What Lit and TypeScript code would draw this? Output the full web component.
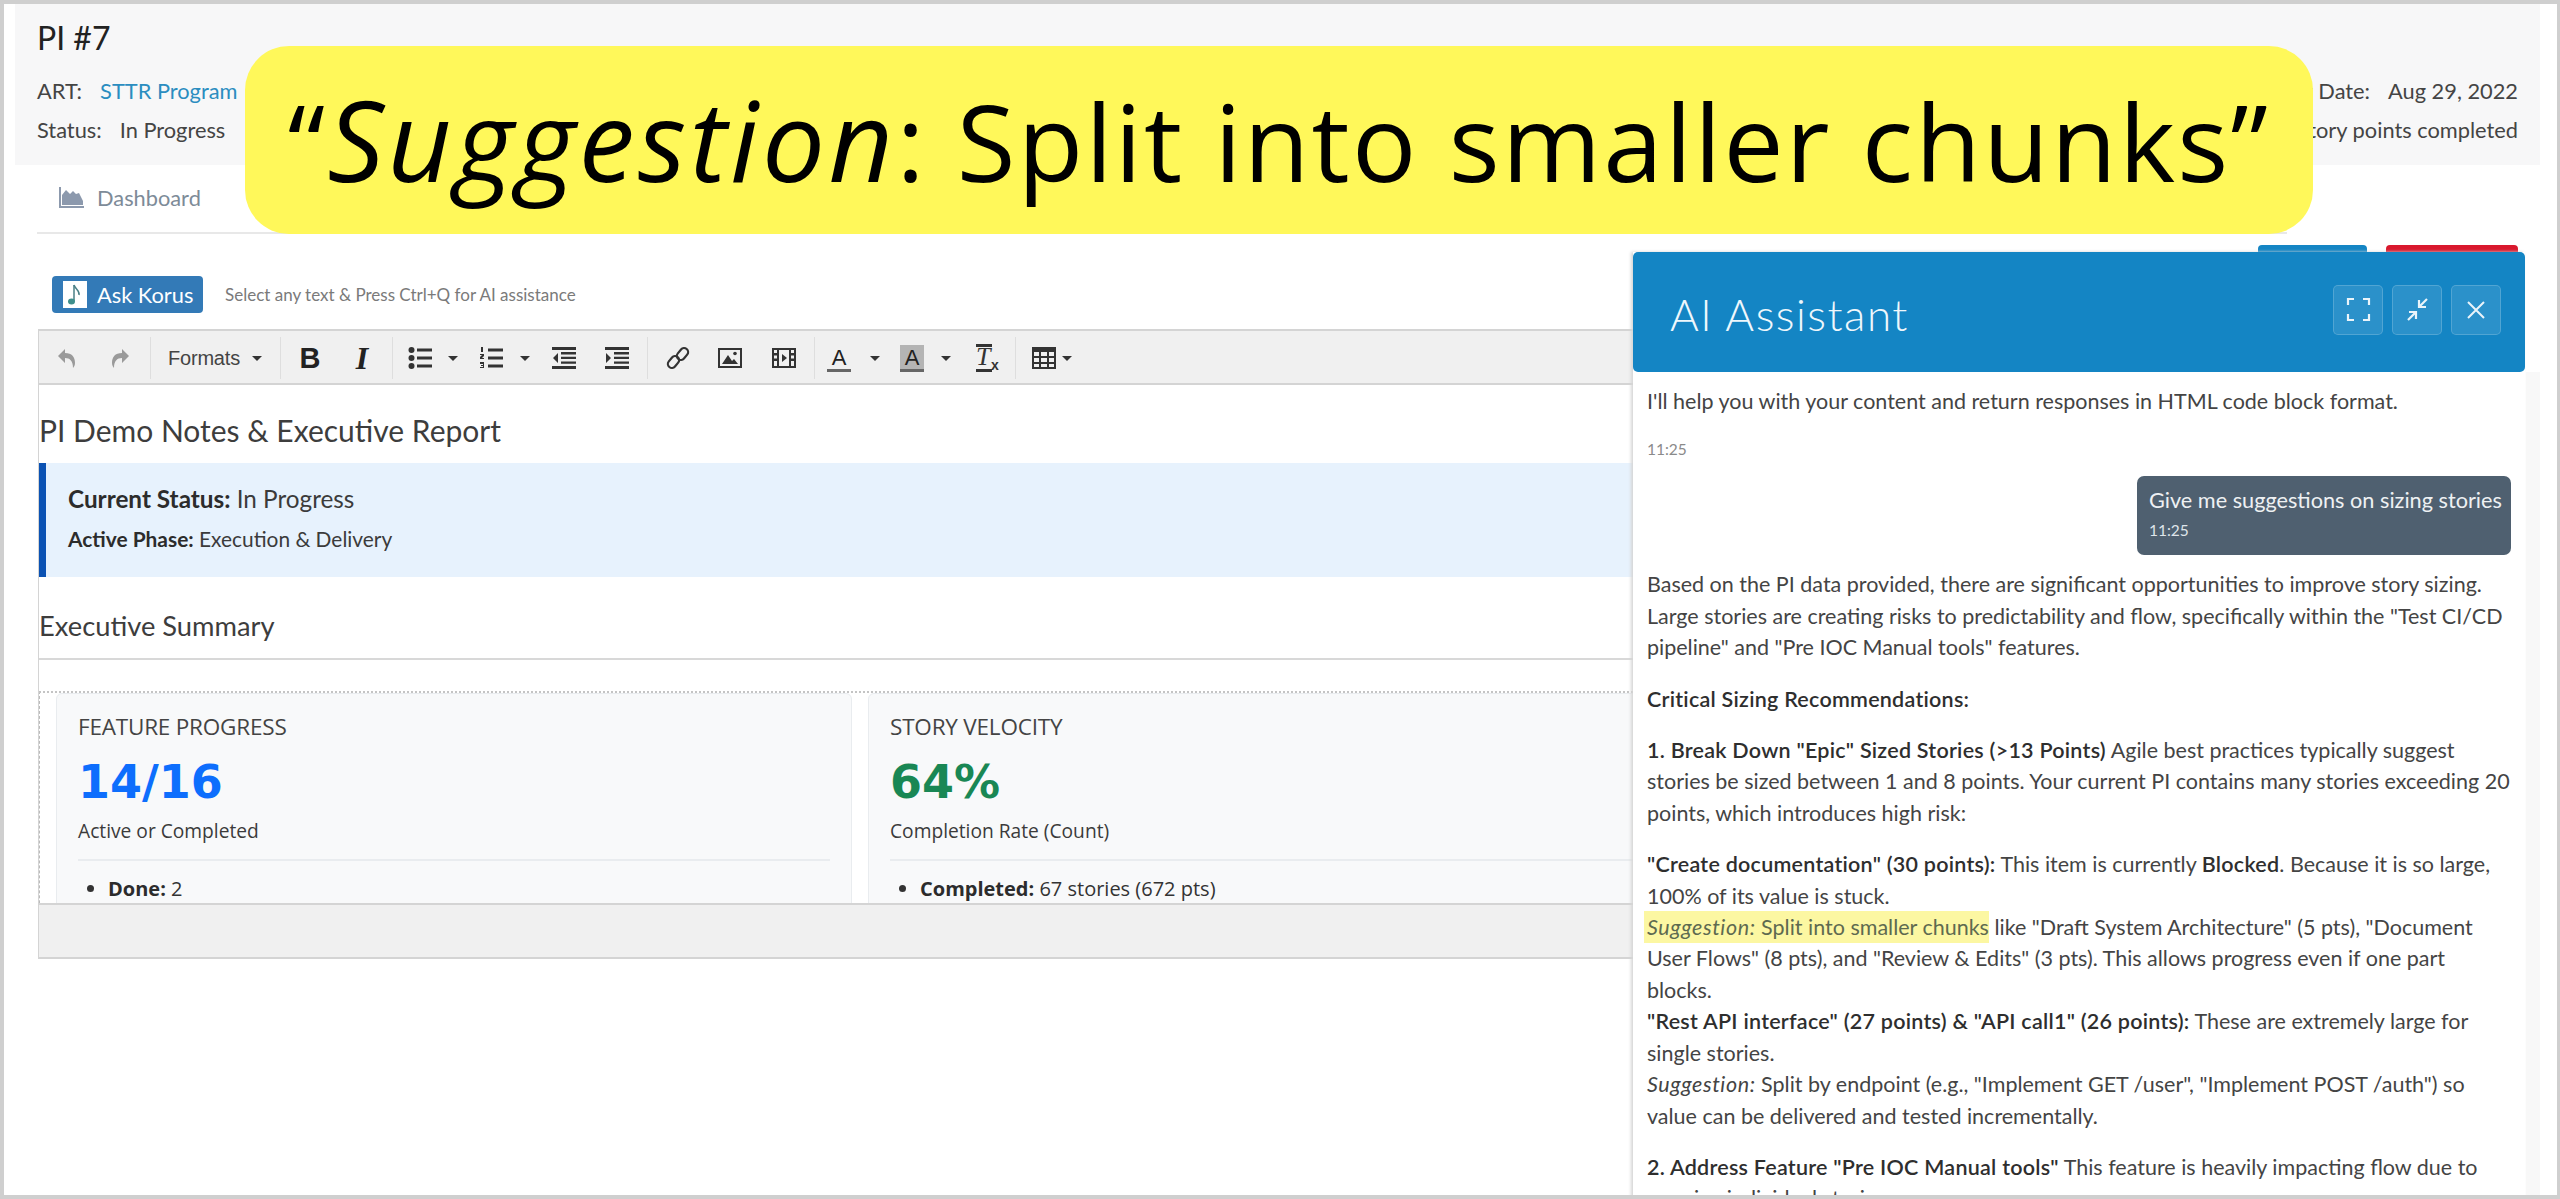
import { LitElement, html, css, svg } from "lit";
import { customElement } from "lit/decorators.js";

const ic = (body: unknown, vb = "0 0 24 24") => html`<svg class="ico" viewBox=${vb} width="24" height="24" fill="currentColor">${body}</svg>`;
const undo = ic(svg`<path d="M3 10 10 3v4c7 0 10 4 10 10 0 2-1 4-2 5 0-7-3-10-8-10v5z"/>`);
const redo = ic(svg`<path d="M21 10 14 3v4C7 7 4 11 4 17c0 2 1 4 2 5 0-7 3-10 8-10v5z"/>`);
const bullet = ic(svg`<circle cx="3.5" cy="4" r="3"/><circle cx="3.5" cy="12" r="3"/><circle cx="3.5" cy="20" r="3"/><path d="M9 2.5h15v3H9zM9 10.5h15v3H9zM9 18.5h15v3H9z"/>`);
const numlist = ic(svg`<path d="M2 1h2v5H2zM1 8h4v2l-2 2h2v1H1v-2l2-2H1zM1 16h4v6H1v-1h3v-1H2v-1h2v-1H1z"/><path d="M9 2.5h15v3H9zM9 10.5h15v3H9zM9 18.5h15v3H9z"/>`);
const outdent = ic(svg`<path d="M0 1h24v3H0zM9 6h15v2.4H9zM9 10.7h15v2.4H9zM9 15.4h15v2.4H9zM0 20h24v3H0zM6 7v10l-5-5z"/>`);
const indent = ic(svg`<path d="M0 1h24v3H0zM9 6h15v2.4H9zM9 10.7h15v2.4H9zM9 15.4h15v2.4H9zM0 20h24v3H0zM1 7v10l5-5z"/>`);
const link = ic(svg`<g fill="none" stroke="currentColor" stroke-width="2.2"><rect x="12.5" y="1.5" width="8" height="13" rx="4" transform="rotate(40 16.5 8)"/><rect x="3.5" y="9.5" width="8" height="13" rx="4" transform="rotate(40 7.5 16)"/></g>`);
const image = ic(svg`<path fill-rule="evenodd" d="M0 2h24v20H0zM2 4v16h20V4z"/><path d="M4 18l6-9 4 6 2-2 4 5z"/><circle cx="17" cy="7.500" r="1.800"/>`);
const media = ic(svg`<path fill-rule="evenodd" d="M0 2h24v20H0zM2 4v3h3V4zM2 9.500v3h3v-3zM2 15v5h3v-5zM19 4v3h3V4zM19 9.500v3h3v-3zM19 15v5h3v-5zM7 4v16h10V4z"/><path d="M10 8l5 4-5 4z"/>`);
const table = ic(svg`<path fill-rule="evenodd" d="M0 1h24v22H0zM2 6v4h5V6zM9 6v4h6V6zM17 6v4h5V6zM2 12v4h5v-4zM9 12v4h6v-4zM17 12v4h5v-4zM2 18v3h5v-3zM9 18v3h6v-3zM17 18v3h5v-3z"/>`);

@customElement("app-root")
export class AppRoot extends LitElement {
  static styles = css`
    :host { display: block; position: relative; box-sizing: border-box; width: 2560px; height: 1199px; overflow: hidden; background: #fff; border: solid #cfcfcf; border-width: 4px 3px 4px 4px; font-family: Lato, "Noto Sans", sans-serif; color: #333; }
    .head { margin: 0 17px 0 11px; height: 161px; box-sizing: border-box; padding: 14px 22px 0; background: #f7f7f8; }
    .title { font-size: 32px; line-height: 40px; color: #222; }
    .row { display: flex; justify-content: space-between; font-size: 21.800px; line-height: 32px; margin-top: 17px; color: #444; }
    .row + .row { margin-top: 7px; }
    .row span.l { margin-right: 18px; }
    .lnk { color: #2b8dc0; }
    .tabs { margin: 0 32px 0 33px; height: 67px; box-sizing: border-box; display: flex; align-items: center; gap: 13px; padding: 0 0 3px 22px; color: #7d8b98; font-size: 21.800px; }
    .tabline { height: 2px; background: #e8e8e8; margin: 0 270px 0 33px; }
    .ask { display: flex; align-items: center; gap: 22px; margin: 42px 0 0 48px; height: 37px; }
    .askbtn { display: flex; align-items: center; gap: 10px; width: 151px; height: 37px; box-sizing: border-box; padding-left: 11px; border-radius: 4px; background: #337ab7; color: #fff; font-size: 21.800px; }
    .note { display: block; flex: none; }
    .hint { font-size: 17px; color: #7a7a7a; }
    .editor { margin: 16px 0 0 34px; width: 2000px; height: 630px; border: solid #d4d4d4; border-width: 2px 1px; box-sizing: border-box; display: flex; flex-direction: column; }
    .bar { height: 52px; flex: none; background: #f0f0f0; border-bottom: 2px solid #d4d4d4; box-sizing: content-box; display: flex; align-items: flex-start; color: #333; }
    .grp { display: flex; align-items: center; height: 42px; margin-top: 6px; border-right: 1px solid #dedede; }
    .grp.last { border: 0; }
    .ico { display: block; flex: none; }
    .dim { color: #9a9a9a; }
    .caret { width: 0; height: 0; border: 5px solid transparent; border-top: 5px solid #333; border-bottom: 0; flex: none; }
    .fmt { font-size: 20px; font-family: "Liberation Sans", sans-serif; color: #444; width: 75px; letter-spacing: -.2px; white-space: nowrap; }
    .tb { width: 24px; text-align: center; flex: none; font-family: "Liberation Sans", sans-serif; font-size: 29px; line-height: 24px; color: #222; }
    .b { font-weight: 700; }
    .i { font-family: "Liberation Serif", serif; font-style: italic; font-weight: 700; font-size: 32px; }
    .au { font-size: 22px; height: 27px; line-height: 25px; box-sizing: border-box; border-bottom: 3px solid #666; }
    .ag { background: #b4b4b4; }
    .tx { position: relative; font-family: "Liberation Serif", serif; font-style: italic; font-size: 26px; height: 28px; line-height: 20px; box-sizing: border-box; border-bottom: 3px solid #333; width: 16px; margin-right: 8px; border-top: 3px solid #333; }
    .tx sub { position: absolute; left: 15px; bottom: -4px; font: 700 14px "Liberation Sans", sans-serif; }
    .p1{padding-left:16px;padding-right:18px}.p2{padding-left:17px;padding-right:18px}.p4{padding-left:15px;padding-right:18px}.p5{padding-left:18px;padding-right:18px}.p6{padding-left:12px;padding-right:15px}
    .m5{margin-left:9px}.m6{margin-left:6px}.m16{margin-left:16px}.m17{margin-left:17px}.m19{margin-left:19px}.m20{margin-left:20px}.m21{margin-left:21px}.m22{margin-left:22px}.m25{margin-left:25px}.m28{margin-left:28px}.m29{margin-left:29px}.m30{margin-left:30px}
    .body { flex: 1; min-height: 0; overflow: hidden; color: #3b3b3b; }
    h2 { margin: 0; font-weight: 400; color: #3d3d3d; }
    .h1 { font-size: 30px; line-height: 40px; padding-top: 25px; margin-bottom: 13px; }
    .call { height: 114px; box-sizing: border-box; border-left: 7px solid #0b52b3; background: #e7f2fd; padding: 19px 0 0 22px; }
    .call div:first-child { font-size: 24.300px; line-height: 34px; }
    .call div + div { font-size: 20.900px; line-height: 28px; margin-top: 9px; }
    strong { font-weight: 700; color: #2c2c2c; }
    .h2 { font-size: 27.300px; line-height: 40px; padding-top: 29px; padding-bottom: 12px; border-bottom: 2px solid #d8d8d8; }
    .grid { margin-top: 31px; height: 300px; border-top: 2px dotted #c4c4c4; border-left: 1px dashed #bbb; display: flex; gap: 16px; padding-left: 16px; font-family: "Open Sans", sans-serif; }
    .card { flex: none; width: 796px; height: 300px; box-sizing: border-box; padding: 19px 21px; background: #f8f9fa; border: 1px solid #e9ecef; border-radius: 6px; }
    .card h3 { margin: 0; font-weight: 400; font-size: 22.500px; line-height: 28px; color: #444; letter-spacing: -.2px; }
    .big { font-family: "DejaVu Sans", sans-serif; font-weight: 700; font-size: 46px; line-height: 56px; margin-top: 13px; }
    .blue { color: #0d6efd; } .green { color: #198754; }
    .sub { font-size: 19.200px; line-height: 30px; margin-top: 6px; padding-bottom: 13px; border-bottom: 2px solid #e9ecef; }
    .card ul { margin: 14px 0 0; padding-left: 30px; font-size: 20px; line-height: 28px; color: #333; }
    .foot { height: 52px; flex: none; background: #f0f0f0; border-top: 2px solid #d4d4d4; }
    .banner { position: absolute; left: 241px; top: 42px; width: 2068px; height: 188px; box-sizing: border-box; background: #fff85a; border-radius: 44px; color: #000; font-family: "Open Sans", sans-serif; font-size: 107px; letter-spacing: 2.250px; white-space: nowrap; display: flex; align-items: center; justify-content: center; padding-bottom: 4px; }
    .banner em { font-size: 112px; letter-spacing: 3.500px; }
    .btns { position: absolute; top: 241px; left: 2254px; display: flex; gap: 19px; }
    .b1 { width: 109px; height: 40px; border-radius: 4px; background: #1485c4; }
    .b2 { width: 132px; height: 40px; border-radius: 4px; background: #d9182d; }
    .band { position: absolute; left: 2522px; top: 368px; width: 14px; height: 830px; background: #f8f8f8; }
    .panel { position: absolute; left: 1629px; top: 248px; width: 892px; height: 960px; display: flex; flex-direction: column; background: #fff; box-shadow: -2px 0 3px #d5d5d5; }
    .phead { height: 120px; flex: none; box-sizing: border-box; display: flex; align-items: center; justify-content: space-between; padding: 0 24px 0 37px; background: #1485c4; border-radius: 5px; color: #fff; }
    .ptitle { font-size: 44px; letter-spacing: 1.500px; color: #eef7fc; padding-top: 4px; font-weight: 300; }
    .pbtns { display: flex; gap: 9px; margin-bottom: 5px; }
    .pb { width: 50px; height: 50px; box-sizing: border-box; border-radius: 5px; background: rgba(255,255,255,.1); border: 1px solid rgba(255,255,255,.18); display: flex; align-items: center; justify-content: center; }
    .pb svg { display: block; }
    .msgs { padding: 14px 14px 0; font-size: 21.500px; line-height: 31.400px; color: #444; }
    .msgs p { margin: 0; }
    .t { font-size: 15.500px; line-height: 20px; color: #8a8a8a; margin-top: 22px; }
    .bub { margin: 17px 0 0 auto; width: 374px; height: 79px; box-sizing: border-box; padding: 8px 12px; border-radius: 7px; background: #4f6070; color: #eef1f3; line-height: 32px; font-size: 21.700px; white-space: nowrap; }
    .bub .t { margin: 4px 0 0; color: #dfe5ea; line-height: 20px; }
    .mt13 { margin-top: 14px !important; }
    .mt20 { margin-top: 20px !important; }
    mark { background: #fcf7a2; color: #5e6a50; padding: 3px 0; margin-left: -3px; padding-left: 3px; }
    em { font-style: italic; }
    .msgs em { letter-spacing: .6px; }
    .k { color: #2e2e2e; font-weight: 600; letter-spacing: .25px; }
  `;

  render() {
    return html`
      <div class="head">
        <div class="title">PI #7</div>
        <div class="row"><div><span class="l">ART:</span><span class="lnk">STTR Program</span></div><div><span class="l">Start Date:</span><span>Aug 29, 2022</span></div></div>
        <div class="row"><div><span class="l">Status:</span><span>In Progress</span></div><div>story points completed</div></div>
      </div>
      <div class="tabs">
        <svg width="25" height="21" viewBox="0 0 25 21" fill="#8c99ad"><path d="M0 0h2v19h23v2H0z"/><path d="M3 18V8l4-5 4 4 3-3 3 3 3-1 4 8v4z"/></svg>
        <span>Dashboard</span>
      </div>
      <div class="tabline"></div>
      <div class="ask">
        <div class="askbtn">
          <svg class="note" width="24" height="27" viewBox="0 0 24 27"><rect width="24" height="27" fill="#fff"/><path d="M11 4v16" stroke="#4a7f86" stroke-width="1.500"/><path d="M11 4c1 4 6 5 5 10" fill="none" stroke="#4a7f86" stroke-width="1.500"/><ellipse cx="8.500" cy="20.500" rx="3.500" ry="3" fill="#3f8f8c"/></svg>
          <span>Ask Korus</span>
        </div>
        <span class="hint">Select any text &amp; Press Ctrl+Q for AI assistance</span>
      </div>
      <div class="editor">
        <div class="bar">
          <div class="grp p1"><span class="dim">${undo}</span><span class="dim m29">${redo}</span></div>
          <div class="grp p2"><span class="fmt">Formats</span><span class="caret m5"></span></div>
          <div class="grp p2"><span class="tb b">B</span><span class="tb i m28">I</span></div>
          <div class="grp p4">${bullet}<span class="caret m16"></span><span class="m21">${numlist}</span><span class="caret m17"></span><span class="m22">${outdent}</span><span class="m29">${indent}</span></div>
          <div class="grp p5">${link}<span class="m28">${image}</span><span class="m30">${media}</span></div>
          <div class="grp p6"><span class="tb au">A</span><span class="caret m19"></span><span class="tb au ag m20">A</span><span class="caret m17"></span><span class="tx m25">T<sub>x</sub></span></div>
          <div class="grp last p1">${table}<span class="caret m6"></span></div>
        </div>
        <div class="body">
          <h2 class="h1">PI Demo Notes &amp; Executive Report</h2>
          <div class="call"><div><strong>Current Status:</strong> In Progress</div><div><strong>Active Phase:</strong> Execution &amp; Delivery</div></div>
          <h2 class="h2">Executive Summary</h2>
          <div class="grid">
            <div class="card"><h3>FEATURE PROGRESS</h3><div class="big blue">14/16</div><div class="sub">Active or Completed</div><ul><li><strong>Done:</strong> 2</li></ul></div>
            <div class="card"><h3>STORY VELOCITY</h3><div class="big green">64%</div><div class="sub">Completion Rate (Count)</div><ul><li><strong>Completed:</strong> 67 stories (672 pts)</li></ul></div>
          </div>
        </div>
        <div class="foot"></div>
      </div>
      <div class="btns"><div class="b1"></div><div class="b2"></div></div>
      <div class="band"></div>
      <div class="panel">
        <div class="phead">
          <div class="ptitle">AI Assistant</div>
          <div class="pbtns">
            <div class="pb"><svg width="25" height="25" viewBox="0 0 25 25" fill="none" stroke="#eaf4fa" stroke-width="2.200"><path d="M2 8V2h6M17 2h6v6M2 17v6h6M17 23h6v-6"/></svg></div>
            <div class="pb"><svg width="25" height="25" viewBox="0 0 25 25" fill="none" stroke="#eaf4fa" stroke-width="2.200"><path d="M22 2l-8 8M14 3v7h7M3 23l8-8M4 15h7v7"/></svg></div>
            <div class="pb"><svg width="20" height="20" viewBox="0 0 20 20" fill="none" stroke="#eaf4fa" stroke-width="2"><path d="M2 2l16 16M18 2L2 18"/></svg></div>
          </div>
        </div>
        <div class="msgs">
          <p>I'll help you with your content and return responses in HTML code block format.</p>
          <div class="t">11:25</div>
          <div class="bub">Give me suggestions on sizing stories<div class="t">11:25</div></div>
          <p class="mt13">Based on the PI data provided, there are significant opportunities to improve story sizing. Large stories are creating risks to predictability and flow, specifically within the "Test CI/CD pipeline" and "Pre IOC Manual tools" features.</p>
          <p class="mt20"><span class="k">Critical Sizing Recommendations:</span></p>
          <p class="mt20"><span class="k">1. Break Down "Epic" Sized Stories (&gt;13 Points)</span> Agile best practices typically suggest stories be sized between 1 and 8 points. Your current PI contains many stories exceeding 20 points, which introduces high risk:</p>
          <p class="mt20"><span class="k">"Create documentation" (30 points):</span> This item is currently <span class="k">Blocked</span>. Because it is so large, 100% of its value is stuck.<br><mark><em>Suggestion:</em> Split into smaller chunks</mark> like "Draft System Architecture" (5 pts), "Document User Flows" (8 pts), and "Review &amp; Edits" (3 pts). This allows progress even if one part blocks.<br><span class="k">"Rest API interface" (27 points) &amp; "API call1" (26 points):</span> These are extremely large for single stories.<br><em>Suggestion:</em> Split by endpoint (e.g., "Implement GET /user", "Implement POST /auth") so value can be delivered and tested incrementally.</p>
          <p class="mt20"><span class="k">2. Address Feature "Pre IOC Manual tools"</span> This feature is heavily impacting flow due to massive individual stories:</p>
        </div>
      </div>
      <div class="banner"><span>“<em>Suggestion</em>: Split into smaller chunks”</span></div>
    `;
  }
}
